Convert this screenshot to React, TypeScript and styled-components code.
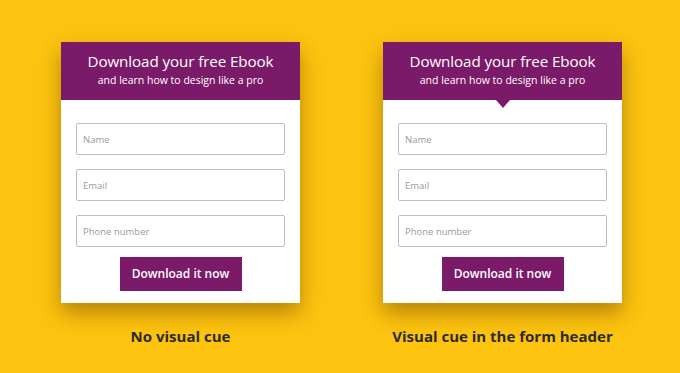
import React from "react";
import styled, { createGlobalStyle } from "styled-components";

const GlobalStyle = createGlobalStyle`
    html, body {
        margin: 0;
        padding: 0;
        background: #fec40f;
        font-family: "Open Sans", "Noto Sans", sans-serif;
    }
`;

const Page = styled.div`
    width: 680px;
    height: 373px;
    box-sizing: border-box;
    padding: 42px 0 0 61px;
    display: flex;
    gap: 83px;
    background: #fec40f;
`;

const Column = styled.div`
    width: 239px;
    display: flex;
    flex-direction: column;
    align-items: center;
`;

const Card = styled.div`
    width: 100%;
    height: 261px;
    background: #ffffff;
    box-shadow: 0 10px 20px rgba(110, 70, 0, 0.5);
    display: flex;
    flex-direction: column;
`;

const Header = styled.div<{ $cue: boolean }>`
    position: relative;
    height: 58px;
    background: #7b1a68;
    color: #ffffff;
    text-align: center;
    box-sizing: border-box;
    padding-top: 9px;

    &::after {
        content: "";
        display: ${(p) => (p.$cue ? "block" : "none")};
        position: absolute;
        left: 50%;
        bottom: -8px;
        margin-left: -7px;
        border-left: 7px solid transparent;
        border-right: 7px solid transparent;
        border-top: 8px solid #7b1a68;
    }
`;

const Title = styled.div`
    font-size: 15.2px;
    line-height: 21px;
    letter-spacing: -0.1px;
`;

const Subtitle = styled.div`
    margin-top: 1px;
    font-size: 10.5px;
    line-height: 15px;
`;

const Form = styled.div`
    padding: 23px 15px 0;
    display: flex;
    flex-direction: column;
    gap: 14px;
    align-items: center;
`;

const Input = styled.div`
    width: 100%;
    height: 32px;
    box-sizing: border-box;
    border: 1px solid #bdbdbd;
    border-radius: 2px;
    padding: 0 6px;
    display: flex;
    align-items: center;
    font-size: 9.5px;
    color: #9a9a9a;
`;

const Button = styled.div`
    margin-top: -4px;
    width: 122px;
    height: 34px;
    background: #7b1a68;
    color: #ffffff;
    font-size: 12px;
    font-weight: 600;
    display: flex;
    align-items: center;
    justify-content: center;
    padding-bottom: 1px;
    box-sizing: border-box;
`;

const Caption = styled.div`
    margin-top: 23px;
    font-size: 15px;
    font-weight: 700;
    color: #2b2b2b;
`;

const FormCard = ({ cue, caption }: { cue: boolean; caption: string }) => (
    <Column>
        <Card>
            <Header $cue={cue}>
                <Title>Download your free Ebook</Title>
                <Subtitle>and learn how to design like a pro</Subtitle>
            </Header>
            <Form>
                <Input>Name</Input>
                <Input>Email</Input>
                <Input>Phone number</Input>
                <Button>Download it now</Button>
            </Form>
        </Card>
        <Caption>{caption}</Caption>
    </Column>
);

export default function App() {
    return (
        <>
            <GlobalStyle />
            <Page>
                <FormCard cue={false} caption="No visual cue" />
                <FormCard cue={true} caption="Visual cue in the form header" />
            </Page>
        </>
    );
}
